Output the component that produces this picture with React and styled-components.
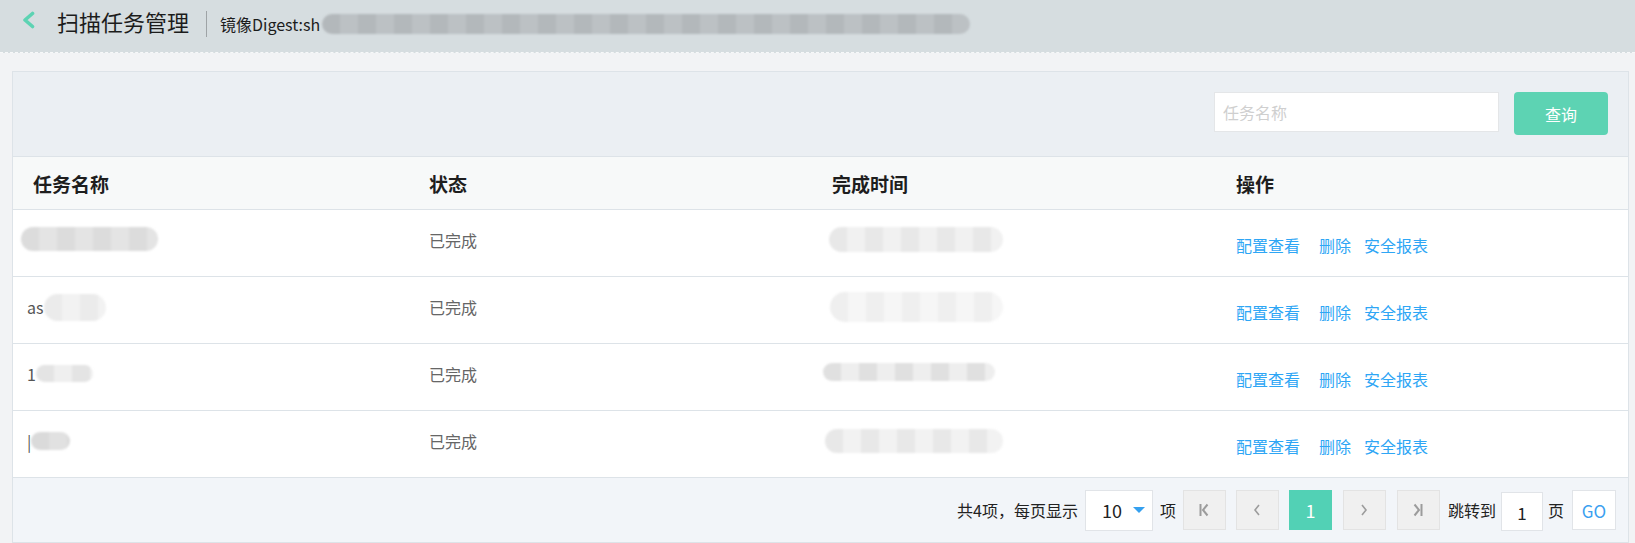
import React from 'react';
import styled, { createGlobalStyle } from 'styled-components';

const FONT = `"Noto Sans CJK SC", "Noto Sans", "Liberation Sans", sans-serif`;

const Global = createGlobalStyle`
  html, body { margin: 0; padding: 0; background: #f2f3f5; }
  body { font-family: ${FONT}; }
  * { box-sizing: border-box; }
`;

const Page = styled.div`
  width: 1635px;
  height: 543px;
  overflow: hidden;
  background: #f2f3f5;
`;

const TopBar = styled.header`
  height: 53px;
  background: #d6dde0;
  border-bottom: 1px dashed #f7f8f9;
  display: flex;
  align-items: center;
  padding: 0 0 6px 21px;
`;

const BackIcon = styled.svg`
  width: 14px;
  height: 18px;
  margin-bottom: 6px;
  flex: none;
`;

const Title = styled.h1`
  margin: 0 0 5px 22px;
  font-size: 22px;
  font-weight: 400;
  color: #1c1c1c;
  line-height: 1;
  white-space: nowrap;
`;

const Divider = styled.span`
  width: 1px;
  height: 26px;
  background: #9ea3a6;
  margin: 2px 13px 0 17px;
`;

const Subtitle = styled.span`
  font-size: 16px;
  color: #1c1c1c;
  line-height: 1;
  margin-top: 2px;
  white-space: nowrap;
`;

const Redacted = styled.span`
  display: inline-block;
  flex: none;
  width: ${(p) => p.$w}px;
  height: ${(p) => p.$h}px;
  border-radius: ${(p) => Math.round(p.$h / 2)}px;
  background: repeating-linear-gradient(
    90deg,
    ${(p) => p.$a} 0 18px,
    ${(p) => p.$b} 18px 36px
  );
  filter: blur(1.2px);
  margin-top: ${(p) => -(p.$up || 0) * 2}px;
  margin-left: ${(p) => p.$ml || 0}px;
`;

const Card = styled.section`
  margin: 18px 6px 0 12px;
  height: 472px;
  border: 1px solid #dde3e8;
  background: #fff;
  display: flex;
  flex-direction: column;
`;

const Toolbar = styled.div`
  height: 85px;
  flex: none;
  background: #ebeff3;
  border-bottom: 1px solid #dde3e8;
  display: flex;
  justify-content: flex-end;
  align-items: flex-start;
  padding: 20px 20px 0 0;
`;

const SearchInput = styled.input`
  width: 285px;
  height: 40px;
  border: 1px solid #e4e6e8;
  background: #fff;
  padding: 0 8px;
  font-family: ${FONT};
  font-size: 16px;
  color: #333;
  outline: none;
  &::placeholder { color: #cfcfcf; }
`;

const SearchButton = styled.button`
  width: 94px;
  height: 43px;
  margin-left: 15px;
  border: none;
  border-radius: 4px;
  background: #5dd3b3;
  color: #fff;
  font-family: ${FONT};
  font-size: 16px;
  cursor: pointer;
`;

const Grid = styled.div`
  display: grid;
  grid-template-columns: 404px 403px 404px 1fr;
  align-items: center;
  border-bottom: 1px solid #dde3e8;
  height: ${(p) => (p.$head ? 53 : 67)}px;
  background: ${(p) => (p.$head ? '#f7f9f9' : '#fff')};
  flex: none;
`;

const HeadCell = styled.div`
  font-size: 19px;
  font-weight: 700;
  color: #1e1e1e;
  padding-left: ${(p) => (p.$first ? 20 : 12)}px;
  line-height: 1;
`;

const Cell = styled.div`
  display: flex;
  align-items: center;
  padding-left: ${(p) => (p.$first ? 14 : 12)}px;
  margin-bottom: 6px;
  font-size: 16px;
  color: #666;
  line-height: 1;
`;

const NameText = styled.span`
  color: #555;
  font-size: 16px;
`;

const Actions = styled.div`
  display: flex;
  align-items: center;
  padding: 3px 0 0 12px;
`;

const Link = styled.a`
  font-size: 16px;
  color: #2ea6f5;
  line-height: 1;
  cursor: pointer;
  margin-right: ${(p) => p.$gap}px;
`;

const Footer = styled.div`
  flex: 1;
  background: #f2f5f9;
  display: flex;
  justify-content: flex-end;
  align-items: center;
  padding-right: 12px;
  font-size: 16px;
  color: #222;
`;

const Label = styled.span`
  margin: ${(p) => p.$m || '0'};
  line-height: 1;
  white-space: nowrap;
`;

const Select = styled.div`
  width: 68px;
  height: 41px;
  background: #fff;
  border: 1px solid #e1e4e8;
  display: flex;
  align-items: center;
  padding-left: 16px;
  margin-left: 7px;
  font-size: 18px;
  color: #222;
`;

const Caret = styled.span`
  width: 0;
  height: 0;
  border-left: 6px solid transparent;
  border-right: 6px solid transparent;
  border-top: 6px solid #35a0ef;
  margin-left: 11px;
`;

const PageBtn = styled.button`
  width: 43px;
  height: 40px;
  margin-left: ${(p) => p.$ml}px;
  border: 1px solid ${(p) => (p.$active ? '#52d1b5' : '#e3e3e3')};
  background: ${(p) => (p.$active ? '#52d1b5' : '#f0f0f0')};
  color: ${(p) => (p.$active ? '#fff' : '#999')};
  font-family: ${FONT};
  font-size: 18px;
  display: flex;
  align-items: center;
  justify-content: center;
  padding: 0;
`;

const JumpInput = styled.div`
  width: 42px;
  height: 39px;
  margin: 2px 5px 0 5px;
  background: #fff;
  border: 1px solid #e1e4e8;
  display: flex;
  align-items: center;
  justify-content: center;
  padding-top: 3px;
  font-size: 17px;
  color: #222;
`;

const GoBtn = styled.button`
  width: 44px;
  height: 40px;
  margin-left: 8px;
  background: #fff;
  border: 1px solid #e1e4e8;
  color: #3aa0f0;
  font-family: ${FONT};
  font-size: 17px;
  padding: 0;
`;

const Icon = ({ d, w = 1.6 }) => (
  <svg width="16" height="16" viewBox="0 0 16 16" fill="none" stroke="#9c9c9c" strokeWidth={w}>
    <path d={d} />
  </svg>
);

const rows = [
  { text: '', name: { w: 137, h: 24, up: 1, ml: -6, a: '#dcdcdc', b: '#e4e4e4' }, time: { w: 174, h: 25, up: 1, ml: -3, a: '#e8e8e8', b: '#f1f1f1' } },
  { text: 'as', name: { w: 62, h: 27, up: 0, ml: 0, a: '#ebebeb', b: '#f2f2f2' }, time: { w: 173, h: 30, up: 0, ml: -2, a: '#efefef', b: '#f6f6f6' } },
  { text: '1', name: { w: 57, h: 17, up: 1, ml: 0, a: '#e4e4e4', b: '#efefef' }, time: { w: 172, h: 18, up: 2, ml: -9, a: '#e0e0e0', b: '#eeeeee' } },
  { text: '|', name: { w: 39, h: 18, up: 0, ml: 0, a: '#dadada', b: '#e1e1e1' }, time: { w: 178, h: 24, up: 0, ml: -7, a: '#e8e8e8', b: '#f2f2f2' } },
];

export default function App() {
  return (
    <Page>
      <Global />
      <TopBar>
        <BackIcon viewBox="0 0 14 18">
          <path d="M11.5 2.5 L4 9 L11.5 15.5" fill="none" stroke="#5dd3b3" strokeWidth="3.6" strokeLinecap="round" strokeLinejoin="round" />
        </BackIcon>
        <Title>扫描任务管理</Title>
        <Divider />
        <Subtitle>镜像Digest:sh</Subtitle>
        <Redacted $w={648} $h={20} $up={-1} $ml={2} $a="#b3b8bb" $b="#bcc1c4" />
      </TopBar>
      <Card>
        <Toolbar>
          <SearchInput placeholder="任务名称" />
          <SearchButton>查询</SearchButton>
        </Toolbar>
        <Grid $head>
          <HeadCell $first>任务名称</HeadCell>
          <HeadCell>状态</HeadCell>
          <HeadCell>完成时间</HeadCell>
          <HeadCell>操作</HeadCell>
        </Grid>
        {rows.map((r, i) => (
          <Grid key={i}>
            <Cell $first>
              {r.text && <NameText>{r.text}</NameText>}
              <Redacted {...{ $w: r.name.w, $h: r.name.h, $up: r.name.up, $ml: r.name.ml, $a: r.name.a, $b: r.name.b }} />
            </Cell>
            <Cell>已完成</Cell>
            <Cell>
              <Redacted {...{ $w: r.time.w, $h: r.time.h, $up: r.time.up, $ml: r.time.ml, $a: r.time.a, $b: r.time.b }} />
            </Cell>
            <Actions>
              <Link $gap={19}>配置查看</Link>
              <Link $gap={13}>删除</Link>
              <Link $gap={0}>安全报表</Link>
            </Actions>
          </Grid>
        ))}
        <Footer>
          <Label>共4项，每页显示</Label>
          <Select>
            10
            <Caret />
          </Select>
          <Label $m="0 0 0 7px">项</Label>
          <PageBtn $ml={7}>
            <Icon w={2} d="M4.5 2 V14 M11.5 2.5 L7 8 L11.5 13.5" />
          </PageBtn>
          <PageBtn $ml={10}>
            <Icon d="M10 3 L6 8 L10 13" />
          </PageBtn>
          <PageBtn $ml={10} $active>1</PageBtn>
          <PageBtn $ml={11}>
            <Icon d="M6 3 L10 8 L6 13" />
          </PageBtn>
          <PageBtn $ml={11}>
            <Icon w={2} d="M4.5 2.5 L9 8 L4.5 13.5 M11.5 2 V14" />
          </PageBtn>
          <Label $m="0 0 0 8px">跳转到</Label>
          <JumpInput>1</JumpInput>
          <Label>页</Label>
          <GoBtn>GO</GoBtn>
        </Footer>
      </Card>
    </Page>
  );
}
